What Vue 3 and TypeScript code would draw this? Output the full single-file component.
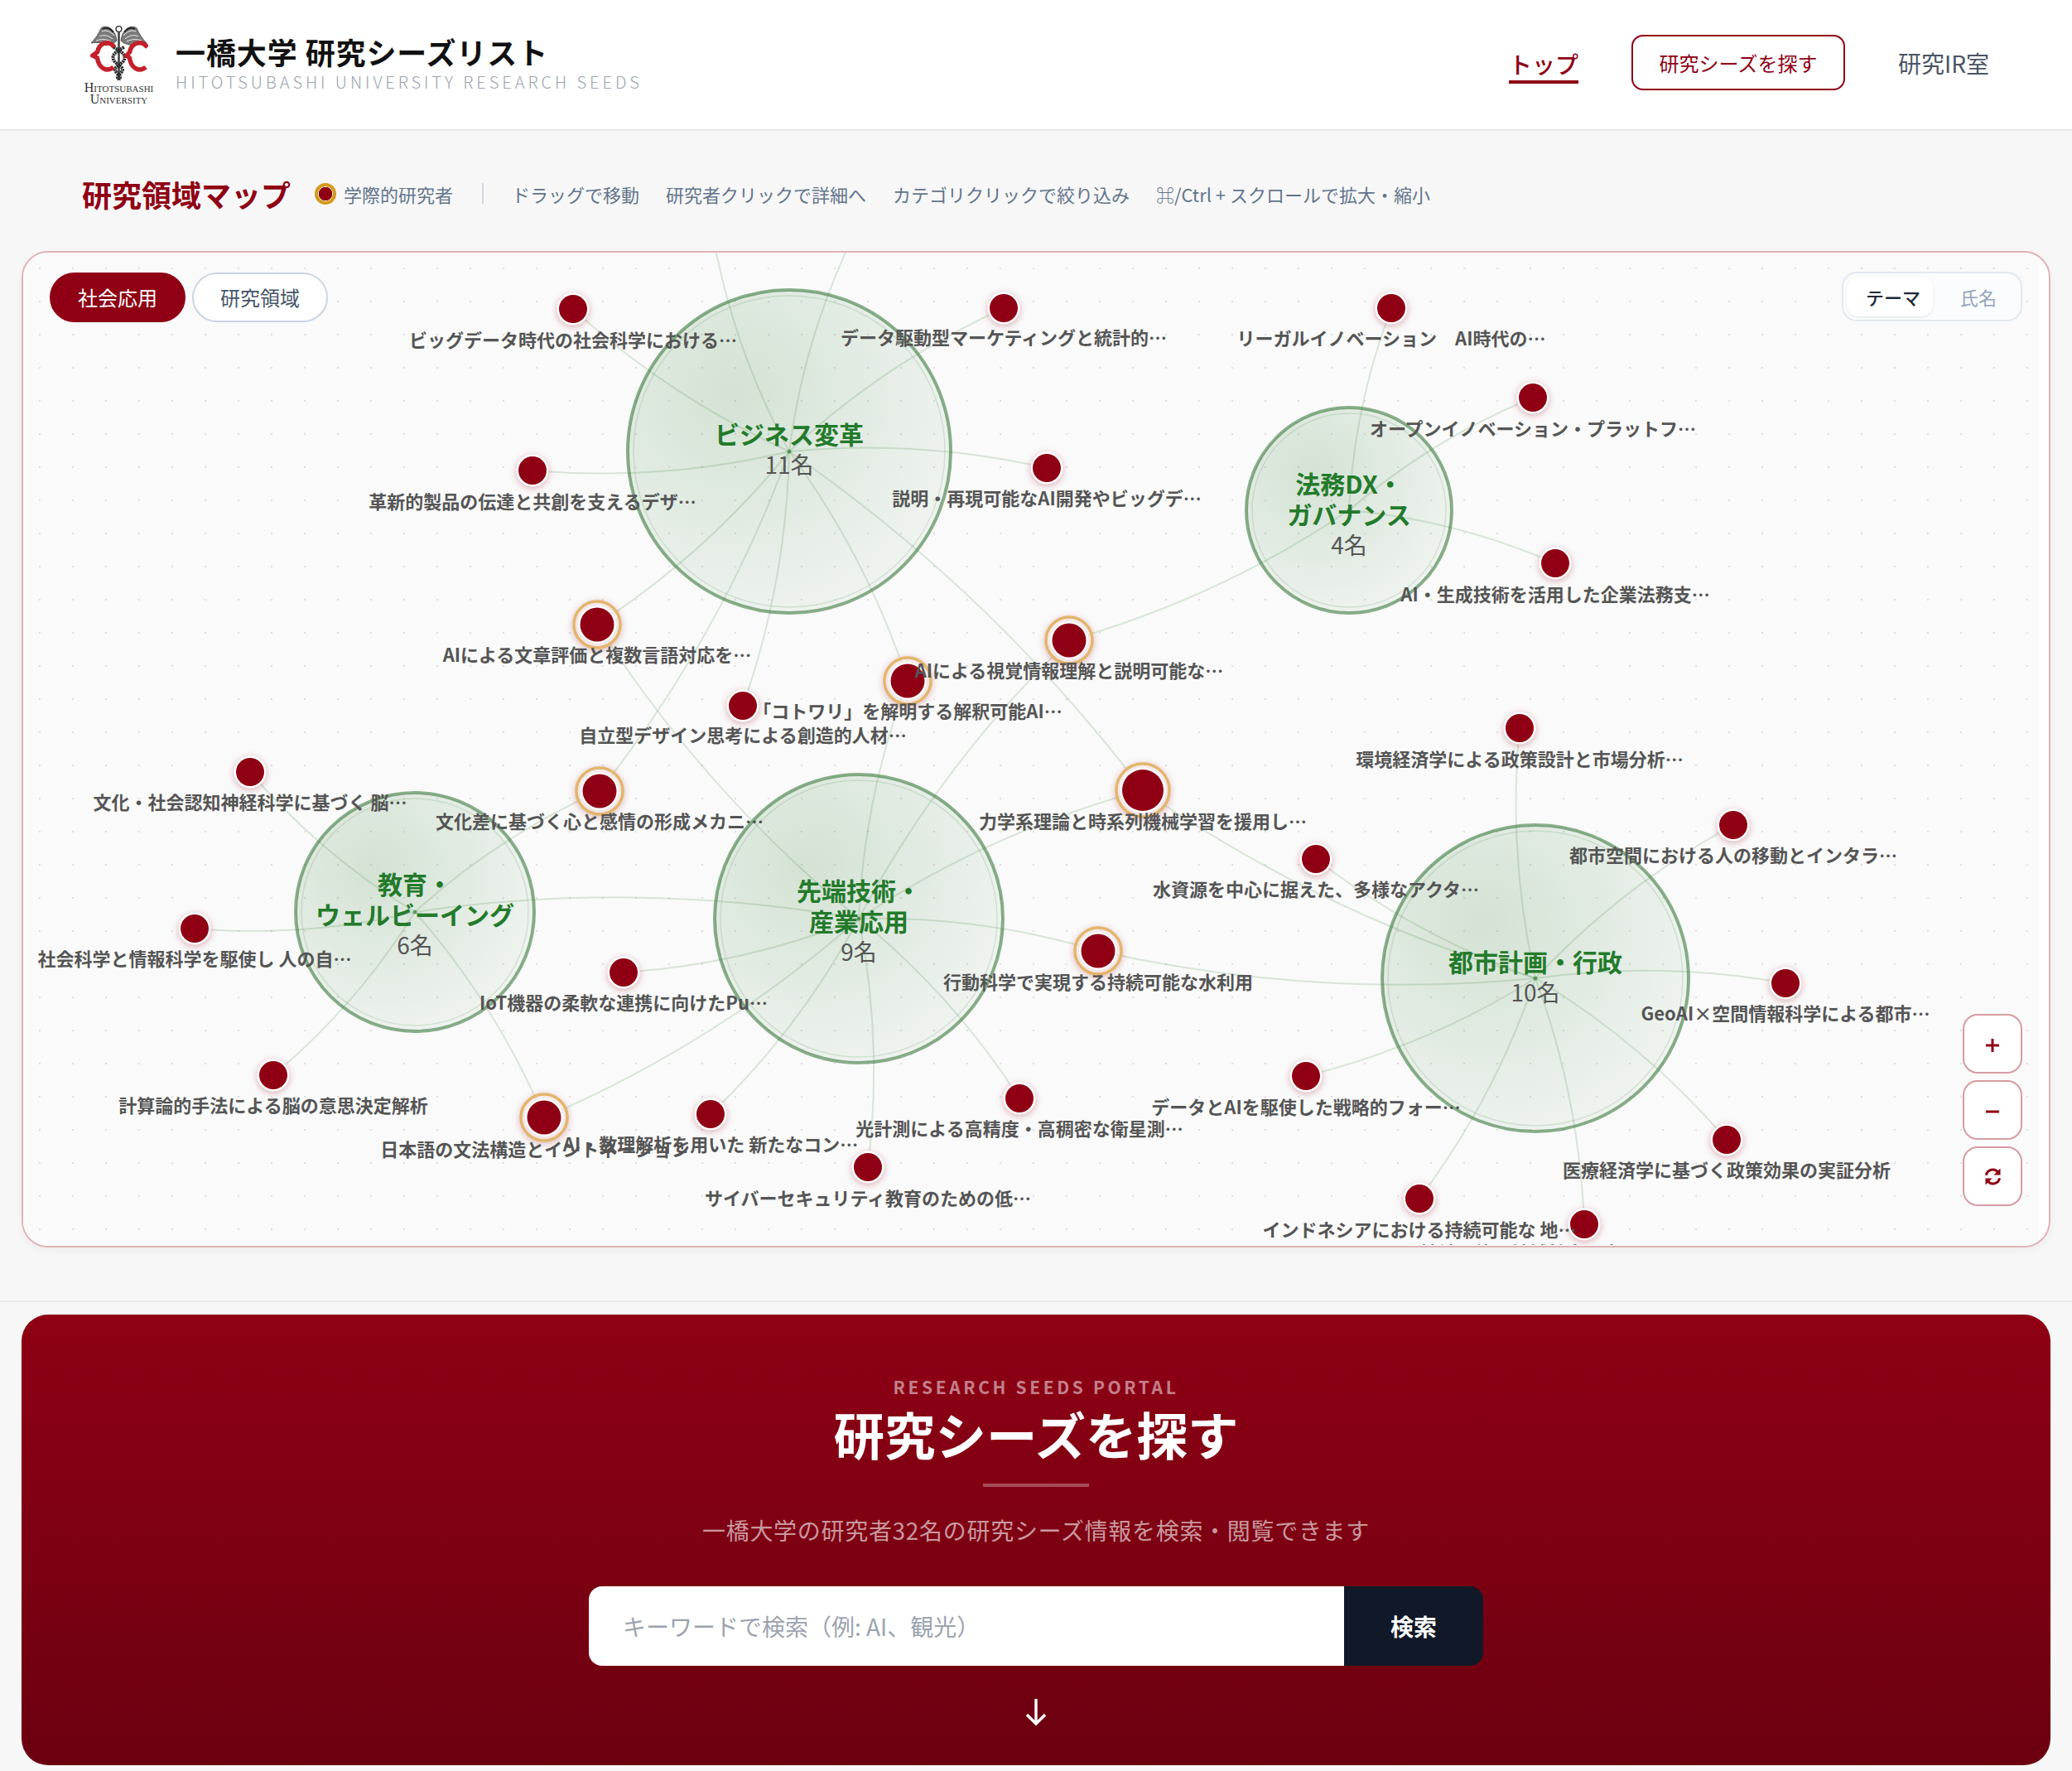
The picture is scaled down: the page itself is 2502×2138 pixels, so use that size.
<template>
  <div class="page" lang="ja">
    <header class="site-header">
      <div class="brand">
        <div class="logo">
          <svg class="logo-mark" viewBox="18 9 70 68" width="70" height="68">
            <line x1="52.5" y1="15" x2="52.5" y2="76" stroke="#444" stroke-width="2.6" />
            <circle cx="52.5" cy="14" r="3.4" fill="#fff" stroke="#333" stroke-width="1.4" />
            <g v-for="s in ['', 'translate(105 0) scale(-1 1)']" :key="s" :transform="s">
              <path d="M49 23 C45 11 36 9 31 13 C28 20 24 26 19 31 C27 30 33 30 37 34 C42 32 47 32 50 28 Z" fill="#7b7b7b" stroke="#333" stroke-width="0.7" />
              <path d="M47 22 C42 16 36 15 32 17 M45 26 C39 21 33 21 29 23 M43 29 C37 26 31 26 25 28" fill="none" stroke="#fff" stroke-width="0.9" />
              <path d="M46 18 C42 13 37 12 33 14" fill="none" stroke="#222" stroke-width="1.8" />
              <path d="M46 36 C58 42 63 47 57 54 C50 60 45 61 50 67 C53 70 56 70 53 75" fill="none" stroke="#2c2c2c" stroke-width="4" stroke-dasharray="2.2 0.7" />
            </g>
            <path d="M47 36 C41 27 29 30 26.5 42 L21 46 L26.5 49 C28 61 38 67 46 60" fill="none" stroke="#c4202b" stroke-width="5.4" />
            <path d="M87 36 C80 27 68 30 65.5 42 L62 46 L65.5 49 C67 61 77 67 85 60" fill="none" stroke="#c4202b" stroke-width="5.4" />
          </svg>
          <div class="logo-text">Hitotsubashi<br />University</div>
        </div>
        <div class="brand-text">
          <div class="brand-title">一橋大学 研究シーズリスト</div>
          <div class="brand-sub">HITOTSUBASHI UNIVERSITY RESEARCH SEEDS</div>
        </div>
      </div>
      <nav class="main-nav">
        <a class="nav-link active">トップ</a>
        <a class="nav-btn">研究シーズを探す</a>
        <a class="nav-link">研究IR室</a>
      </nav>
    </header>

    <section class="map-section">
      <div class="map-toolbar">
        <h2 class="map-title">研究領域マップ</h2>
        <span class="legend-dot"></span>
        <span class="hint legend-label">学際的研究者</span>
        <span class="hint-sep"></span>
        <span class="hint" v-for="h in hints" :key="h">{{ h }}</span>
      </div>

      <div class="map-card">
        <div class="map-canvas">
          <svg class="map-svg" viewBox="28 305 2434 1198" width="2434" height="1198">
            <defs>
              <radialGradient id="clusterFill" cx="33%" cy="32%" r="75%">
                <stop offset="0%" stop-color="#2e7d32" stop-opacity="0.19" />
                <stop offset="40%" stop-color="#2e7d32" stop-opacity="0.135" />
                <stop offset="100%" stop-color="#2e7d32" stop-opacity="0.05" />
              </radialGradient>
            </defs>

            <g v-for="c in clusters" :key="c.id">
              <circle :cx="c.x" :cy="c.y" :r="c.r" fill="url(#clusterFill)" stroke="#2a6e2e" stroke-opacity="0.55" stroke-width="4" />
              <circle :cx="c.x" :cy="c.y" :r="c.r - 7" fill="none" stroke="#2e7d32" stroke-opacity="0.15" stroke-width="1.5" />
            </g>

            <path v-for="(d, i) in edgePaths" :key="i" :d="d" class="edge" />
            <circle v-for="c in clusters" :key="'dot' + c.id" :cx="c.x" :cy="c.y" r="2.5" fill="#2e7d32" fill-opacity="0.6" />

            <g v-for="c in clusters" :key="'txt' + c.id">
              <text v-for="(line, i) in c.lines" :key="line" :x="c.x" :y="c.y + c.top + i * 37" class="cluster-name">{{ line }}</text>
              <text :x="c.x" :y="c.y + c.top + c.lines.length * 37" class="cluster-count">{{ c.count }}名</text>
            </g>

            <g v-for="n in nodes" :key="n.id" class="node">
              <circle v-if="n.ring" :cx="n.x" :cy="n.y" :r="n.ring" fill="#fff" fill-opacity="0.6" stroke="#e3b56b" stroke-width="3.5" />
              <circle :cx="n.x" :cy="n.y" :r="n.r + 2.5" fill="#fff" />
              <circle :cx="n.x" :cy="n.y" :r="n.r" fill="#8f0014" />
            </g>
            <text v-for="n in nodes" :key="'l' + n.id" :x="n.lx ?? n.x" :y="n.ly - 1.5" class="node-label">{{ n.label }}</text>
          </svg>

          <div class="axis-tabs">
            <button class="pill on">社会応用</button>
            <button class="pill">研究領域</button>
          </div>

          <div class="label-toggle">
            <span class="toggle-item on">テーマ</span>
            <span class="toggle-item">氏名</span>
          </div>

          <div class="zoom-controls">
            <button class="zoom-btn" aria-label="拡大">
              <svg class="zoom-glyph" viewBox="0 0 18 18" width="18" height="18"><path d="M9 1v16M1 9h16" stroke="#8f0014" stroke-width="3" fill="none" /></svg>
            </button>
            <button class="zoom-btn" aria-label="縮小">
              <svg class="zoom-glyph" viewBox="0 0 18 18" width="18" height="18"><path d="M1 9h16" stroke="#8f0014" stroke-width="3" fill="none" /></svg>
            </button>
            <button class="zoom-btn" aria-label="リセット">
              <svg viewBox="0 0 20 20" width="23" height="23">
                <path d="M3 8.5A7 7 0 0 1 15.5 5.5" fill="none" stroke="#8f0014" stroke-width="2.6" />
                <path d="M17.8 1.2v7h-7z" fill="#8f0014" />
                <path d="M17 11.5A7 7 0 0 1 4.5 14.5" fill="none" stroke="#8f0014" stroke-width="2.6" />
                <path d="M2.2 18.8v-7h7z" fill="#8f0014" />
              </svg>
            </button>
          </div>
        </div>
      </div>
    </section>

    <section class="search-panel">
      <div class="eyebrow">RESEARCH SEEDS PORTAL</div>
      <h1 class="search-title">研究シーズを探す</h1>
      <div class="search-rule"></div>
      <p class="search-lead">一橋大学の研究者32名の研究シーズ情報を検索・閲覧できます</p>
      <form class="search-form" @submit.prevent>
        <input class="search-input" type="text" placeholder="キーワードで検索（例: AI、観光）" />
        <button class="search-btn" type="submit">検索</button>
      </form>
      <svg class="scroll-arrow" viewBox="0 0 32 34" width="32" height="34">
        <path d="M16 2v30M5 21l11 11 11-11" fill="none" stroke="#fff" stroke-width="3.4" />
      </svg>
    </section>
  </div>
</template>

<script setup lang="ts">
import { computed } from 'vue'

interface Cluster { id: string; x: number; y: number; r: number; lines: string[]; count: number; top: number }
interface MapNode { id: number; x: number; y: number; r: number; ring?: number; label: string; ly: number; lx?: number }

const hints = ['ドラッグで移動', '研究者クリックで詳細へ', 'カテゴリクリックで絞り込み', '⌘/Ctrl + スクロールで拡大・縮小']

const clusters: Cluster[] = [
  { id: 'biz', x: 953, y: 545, r: 195, lines: ['ビジネス変革'], count: 11, top: -22 },
  { id: 'law', x: 1629, y: 616, r: 124, lines: ['法務DX・', 'ガバナンス'], count: 4, top: -33 },
  { id: 'edu', x: 501, y: 1101, r: 144, lines: ['教育・', 'ウェルビーイング'], count: 6, top: -35 },
  { id: 'tech', x: 1037, y: 1109, r: 174, lines: ['先端技術・', '産業応用'], count: 9, top: -35 },
  { id: 'city', x: 1854, y: 1181, r: 185, lines: ['都市計画・行政'], count: 10, top: -21 },
]

const small = 17
const big = 20.5
const nodes: MapNode[] = [
  { id: 1, x: 692, y: 373, r: small, label: 'ビッグデータ時代の社会科学における…', ly: 410 },
  { id: 2, x: 1212, y: 372, r: small, label: 'データ駆動型マーケティングと統計的…', ly: 407 },
  { id: 3, x: 1680, y: 372, r: small, label: 'リーガルイノベーション　AI時代の…', ly: 408 },
  { id: 4, x: 1851, y: 480, r: small, label: 'オープンイノベーション・プラットフ…', ly: 517 },
  { id: 5, x: 643, y: 568, r: small, label: '革新的製品の伝達と共創を支えるデザ…', ly: 605 },
  { id: 6, x: 1264, y: 565, r: small, label: '説明・再現可能なAI開発やビッグデ…', ly: 601 },
  { id: 7, x: 1878, y: 680, r: small, label: 'AI・生成技術を活用した企業法務支…', ly: 717 },
  { id: 8, x: 721, y: 754, r: big, ring: 28, label: 'AIによる文章評価と複数言語対応を…', ly: 790 },
  { id: 9, x: 1291, y: 773, r: big, ring: 28, label: 'AIによる視覚情報理解と説明可能な…', ly: 809 },
  { id: 10, x: 1096, y: 822, r: big, ring: 28, label: '「コトワリ」を解明する解釈可能AI…', ly: 858 },
  { id: 11, x: 897, y: 852, r: small, label: '自立型デザイン思考による創造的人材…', ly: 887 },
  { id: 12, x: 1835, y: 879, r: small, label: '環境経済学による政策設計と市場分析…', ly: 916 },
  { id: 13, x: 302, y: 932, r: small, label: '文化・社会認知神経科学に基づく 脳…', ly: 968 },
  { id: 14, x: 724, y: 955, r: big, ring: 28, label: '文化差に基づく心と感情の形成メカニ…', ly: 991 },
  { id: 15, x: 1380, y: 954, r: 25, ring: 32, label: '力学系理論と時系列機械学習を援用し…', ly: 991 },
  { id: 16, x: 2093, y: 996, r: small, label: '都市空間における人の移動とインタラ…', ly: 1032 },
  { id: 17, x: 1589, y: 1037, r: small, label: '水資源を中心に据えた、多様なアクタ…', ly: 1073 },
  { id: 18, x: 235, y: 1121, r: small, label: '社会科学と情報科学を駆使し 人の自…', ly: 1157 },
  { id: 19, x: 1326, y: 1148, r: big, ring: 28, label: '行動科学で実現する持続可能な水利用', ly: 1185 },
  { id: 20, x: 753, y: 1174, r: small, label: 'IoT機器の柔軟な連携に向けたPu…', ly: 1210 },
  { id: 21, x: 2156, y: 1187, r: small, label: 'GeoAI×空間情報科学による都市…', ly: 1223 },
  { id: 22, x: 330, y: 1298, r: small, label: '計算論的手法による脳の意思決定解析', ly: 1334 },
  { id: 23, x: 1577, y: 1299, r: small, label: 'データとAIを駆使した戦略的フォー…', ly: 1336 },
  { id: 24, x: 1231, y: 1326, r: small, label: '光計測による高精度・高稠密な衛星測…', ly: 1362 },
  { id: 25, x: 657, y: 1349, r: big, ring: 28, label: '日本語の文法構造とイントネーション', ly: 1387, lx: 646 },
  { id: 26, x: 858, y: 1345, r: small, label: 'AI・数理解析を用いた 新たなコン…', ly: 1381 },
  { id: 27, x: 2085, y: 1376, r: small, label: '医療経済学に基づく政策効果の実証分析', ly: 1412 },
  { id: 28, x: 1048, y: 1409, r: small, label: 'サイバーセキュリティ教育のための低…', ly: 1446 },
  { id: 29, x: 1714, y: 1447, r: small, label: 'インドネシアにおける持続可能な 地…', ly: 1484 },
  { id: 30, x: 1913, y: 1478, r: small, label: '持続可能な地域社会を実現するための…', ly: 1512 },
]

// node id -> clusters it hangs off
const links: [number, string][] = [
  [1, 'biz'], [2, 'biz'], [5, 'biz'], [6, 'biz'], [8, 'biz'], [10, 'biz'], [11, 'biz'], [14, 'biz'], [15, 'biz'],
  [3, 'law'], [4, 'law'], [7, 'law'], [9, 'law'],
  [13, 'edu'], [14, 'edu'], [18, 'edu'], [22, 'edu'], [25, 'edu'],
  [8, 'tech'], [9, 'tech'], [10, 'tech'], [15, 'tech'], [19, 'tech'], [20, 'tech'], [24, 'tech'], [25, 'tech'], [26, 'tech'], [28, 'tech'],
  [12, 'city'], [15, 'city'], [16, 'city'], [17, 'city'], [19, 'city'], [21, 'city'], [23, 'city'], [27, 'city'], [29, 'city'], [30, 'city'],
]

// lines whose far end sits outside the canvas or on another cluster
const extraEnds: [number, number, string][] = [
  [862, 290, 'biz'],
  [1028, 290, 'biz'],
  [1037, 1109, 'edu'],
]

function curve(x1: number, y1: number, x2: number, y2: number): string {
  const dx = x2 - x1
  const dy = y2 - y1
  const len = Math.hypot(dx, dy)
  const c = len * 0.08
  const mx = (x1 + x2) / 2 - (dy / len) * c
  const my = (y1 + y2) / 2 + (dx / len) * c
  return `M${x1} ${y1}Q${mx} ${my} ${x2} ${y2}`
}

const edgePaths = computed(() => {
  const find = (id: string) => clusters.find(c => c.id === id)!
  const fromNodes = links.map(([n, c]) => {
    const node = nodes.find(m => m.id === n)!
    const cl = find(c)
    return curve(node.x, node.y, cl.x, cl.y)
  })
  const rest = extraEnds.map(([x, y, c]) => curve(x, y, find(c).x, find(c).y))
  return [...fromNodes, ...rest]
})
</script>

<style>
html, body { margin: 0; background: #f7f7f7; }
</style>

<style scoped>
.page {
  width: 2502px;
  height: 2138px;
  overflow: hidden;
  background: #f7f7f7;
  font-family: "Noto Sans CJK JP", "Noto Sans", sans-serif;
  color: #333;
}
.site-header {
  height: 156px;
  box-sizing: content-box;
  display: flex;
  align-items: center;
  justify-content: space-between;
  padding: 0 100px 0 99px;
  background: #fff;
  border-bottom: 2px solid #e8e8e8;
}
.brand { display: flex; align-items: center; gap: 24px; }
.logo { width: 89px; display: flex; flex-direction: column; align-items: center; }
.logo-mark { display: block; }
.logo-text {
  margin-top: 1px;
  font-family: "Liberation Serif", serif;
  font-variant: small-caps;
  font-size: 16px;
  line-height: 14px;
  text-align: center;
  color: #333;
  white-space: nowrap;
}
.brand-text { margin-top: -6px; }
.brand-title { font-size: 36px; line-height: 50px; font-weight: 700; letter-spacing: 0.9px; color: #111; white-space: nowrap; }
.brand-sub {
  margin-top: -2px;
  font-size: 20px;
  line-height: 28px;
  font-weight: 300;
  letter-spacing: 3.95px;
  color: #9ca3af;
  white-space: nowrap;
}
.main-nav { display: flex; align-items: center; gap: 64px; }
.nav-link { font-size: 28px; line-height: 40px; color: #4b5563; padding-bottom: 4px; }
.nav-link.active { color: #8f0014; font-weight: 500; border-bottom: 4px solid #8f0014; padding-bottom: 0; margin-top: 2px; }
.nav-btn {
  box-sizing: border-box;
  width: 258px;
  height: 67px;
  margin-bottom: 5px;
  display: flex;
  align-items: center;
  justify-content: center;
  border: 2.5px solid #8f0014;
  border-radius: 14px;
  color: #8f0014;
  font-size: 24px;
}

.map-section { padding: 0 26px; }
.map-toolbar {
  height: 145px;
  box-sizing: border-box;
  padding: 6px 0 0 73px;
  display: flex;
  align-items: center;
  gap: 32px;
}
.map-title { margin: 0; font-size: 36px; font-weight: 700; color: #8f0014; white-space: nowrap; }
.legend-dot {
  box-sizing: border-box;
  width: 26px;
  height: 26px;
  margin-left: -3px;
  margin-right: -23px;
  border-radius: 50%;
  border: 4px solid #d39a1c;
  background: radial-gradient(circle, #8f0014 0 8px, #fff 8.5px);
}
.hint { font-size: 22px; line-height: 30px; color: #64748b; white-space: nowrap; }
.hint-sep { width: 2px; height: 25px; background: #d5dae1; margin-left: 3px; margin-right: 2px; }
.map-card {
  box-sizing: border-box;
  height: 1203px;
  background: #fff;
  border: 2px solid #e0b2b6;
  border-radius: 32px;
  overflow: hidden;
  box-shadow: 0 4px 12px rgba(0, 0, 0, 0.04);
}
.map-canvas {
  position: relative;
  width: 2434px;
  height: 1199px;
  overflow: hidden;
  background-color: #fafafa;
  background-image: radial-gradient(circle, #dedede 1px, transparent 1.6px);
  background-size: 40px 40px;
  background-position: 0 -1px;
}
.map-svg { display: block; }
.edge { fill: none; stroke: #2e7d32; stroke-opacity: 0.17; stroke-width: 2; }
.cluster-name { font-size: 30px; font-weight: 700; fill: #237a2b; text-anchor: middle; dominant-baseline: central; }
.cluster-count { font-size: 28px; fill: #555; text-anchor: middle; dominant-baseline: central; }
.node { filter: drop-shadow(0 2px 4px rgba(143, 0, 20, 0.3)); }
.node-label { font-size: 22px; font-weight: 600; fill: #555; text-anchor: middle; dominant-baseline: central; }

.axis-tabs { position: absolute; left: 32px; top: 24px; display: flex; gap: 8px; }
.pill {
  box-sizing: border-box;
  height: 60px;
  width: 164px;
  border-radius: 30px;
  border: 2px solid #cbd5e1;
  background: #fff;
  color: #475569;
  font-family: inherit;
  font-size: 24px;
  padding: 0 0 2px;
}
.pill.on { background: #8f0014; border-color: #8f0014; color: #fff; }

.label-toggle {
  position: absolute;
  right: 20px;
  top: 23px;
  box-sizing: border-box;
  width: 218px;
  height: 60px;
  padding: 4px;
  display: flex;
  border: 2px solid #e2e8f0;
  border-radius: 18px;
  background: #fbfcfd;
}
.toggle-item {
  flex: 1;
  display: flex;
  align-items: center;
  justify-content: center;
  padding-left: 8px;
  font-size: 22px;
  color: #94a3b8;
  border-radius: 14px;
}
.toggle-item.on { flex: 0 0 104px; box-sizing: border-box; background: #fff; color: #1f2937; font-weight: 500; box-shadow: 0 1px 3px rgba(0, 0, 0, 0.1); }

.zoom-controls { position: absolute; right: 20px; bottom: 48px; display: flex; flex-direction: column; gap: 8px; }
.zoom-btn {
  box-sizing: border-box;
  width: 72px;
  height: 72px;
  padding: 0;
  display: flex;
  align-items: center;
  justify-content: center;
  border: 2px solid #d69ca2;
  border-radius: 18px;
  background: #fff;
}
.zoom-glyph { margin-top: 4px; }

.search-panel {
  box-sizing: border-box;
  width: 2450px;
  height: 544px;
  margin: 81px 26px 0;
  padding-top: 72px;
  display: flex;
  flex-direction: column;
  align-items: center;
  border-radius: 32px;
  background: linear-gradient(180deg, #8f0014 0%, #6b0010 100%);
  position: relative;
}
.search-panel::before {
  content: "";
  position: absolute;
  left: -26px;
  right: -26px;
  top: -17px;
  height: 2px;
  background: #ebebeb;
}
.eyebrow { font-size: 21px; line-height: 30px; font-weight: 700; letter-spacing: 3.6px; color: rgba(255, 255, 255, 0.5); }
.search-title { margin: 2px 0 0; font-size: 61.5px; line-height: 80px; font-weight: 700; color: #fff; }
.search-rule { width: 128px; height: 4px; margin-top: 20px; background: rgba(255, 255, 255, 0.3); }
.search-lead { margin: 32px 0 0; font-size: 28px; line-height: 40px; letter-spacing: 0.7px; color: rgba(255, 255, 255, 0.6); }
.search-form { display: flex; width: 1080px; height: 96px; margin-top: 48px; border-radius: 16px; overflow: hidden; }
.search-input {
  flex: 1;
  min-width: 0;
  border: 0;
  outline: 0;
  padding: 0 41px;
  background: #fff;
  font-family: inherit;
  font-size: 28px;
}
.search-input::placeholder { color: #9ca3af; }
.search-btn {
  width: 168px;
  border: 0;
  background: #111827;
  color: #fff;
  font-family: inherit;
  font-size: 28px;
  font-weight: 700;
}
.scroll-arrow { margin-top: 38px; }
</style>
